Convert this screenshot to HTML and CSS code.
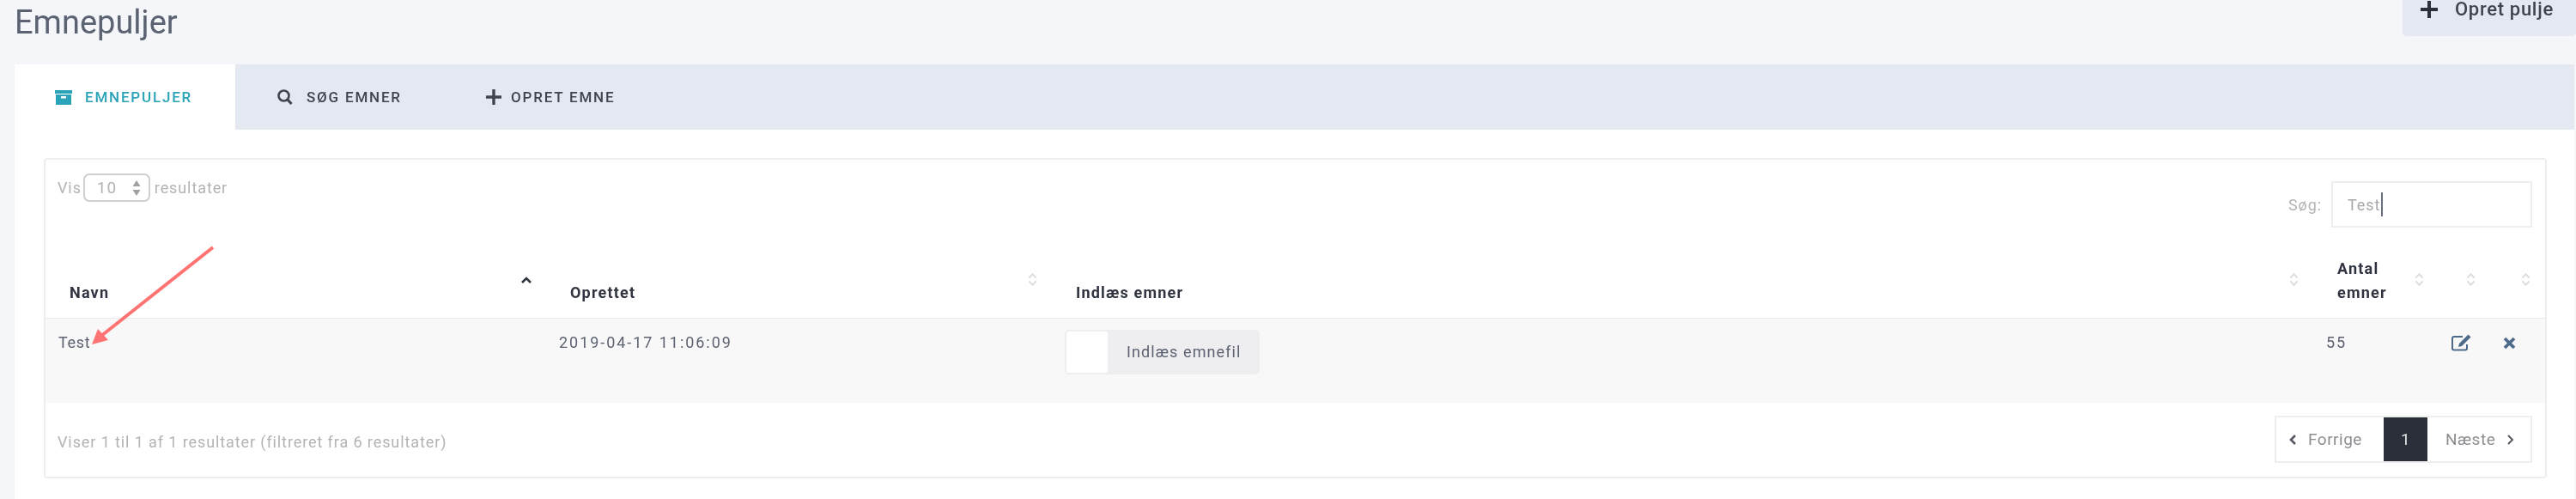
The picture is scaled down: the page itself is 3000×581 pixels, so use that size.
FILE: index.html
```html
<!DOCTYPE html>
<html lang="da">
<head>
<meta charset="utf-8">
<title>Emnepuljer</title>
<link rel="stylesheet" href="styles.css">
</head>
<body>
<div class="page">
  <header class="topbar">
    <h1 class="title">Emnepuljer</h1>
    <button class="new-btn" type="button">
      <svg class="new-icon" viewBox="0 0 20 20"><path d="M8 0h4v8h8v4h-8v8H8v-8H0V8h8z"/></svg>
      <span>Opret pulje</span>
    </button>
  </header>
  <main class="panel">
    <nav class="tabs">
      <a class="tab tab-active">
        <svg class="tab-icon-box" viewBox="0 0 20 17"><path d="M0 0h20v4H0zM1 5h18v12H1zM7 7v2.5h6V7z" fill-rule="evenodd"/></svg>
        <span>EMNEPULJER</span>
      </a>
      <a class="tab tab-search">
        <svg class="tab-icon-search" viewBox="0 0 18 18"><circle cx="7.5" cy="7.5" r="6" fill="none" stroke-width="2.6"/><path d="M11.5 11.5l5 5.5" fill="none" stroke-width="3"/></svg>
        <span>SØG EMNER</span>
      </a>
      <a class="tab tab-create">
        <svg class="tab-icon-plus" viewBox="0 0 18 18"><path d="M7.3 0h3.4v7.3H18v3.4h-7.3V18H7.3v-7.3H0V7.3h7.3z"/></svg>
        <span>OPRET EMNE</span>
      </a>
    </nav>
    <section class="card">
      <div class="toolbar">
        <div class="length">
          <span>Vis</span>
          <span class="select"><span>10</span>
            <svg class="select-arrows" viewBox="0 0 10 18"><path d="M5 0l4.5 7h-9zM5 18l-4.500-7h9z"/></svg>
          </span>
          <span class="length-after">resultater</span>
        </div>
        <div class="search">
          <span>Søg:</span>
          <span class="search-input"><span>Test</span><i class="caret"></i></span>
        </div>
      </div>
      <table class="grid">
        <colgroup>
          <col class="c1"><col class="c2"><col class="c3"><col class="c4"><col class="c5"><col class="c6">
        </colgroup>
        <thead>
          <tr>
            <th><div class="th"><span>Navn</span>
              <svg class="sort sort-on" viewBox="0 0 12 8"><path d="M1 7l5-5 5 5" fill="none" stroke-width="2.6"/></svg></div></th>
            <th><div class="th"><span>Oprettet</span>
              <svg class="sort" viewBox="0 0 12 18"><path d="M1.5 7L6 2l4.500 5M1.500 11L6 16l4.500-5" fill="none" stroke-width="2"/></svg></div></th>
            <th><div class="th"><span>Indlæs emner</span>
              <svg class="sort" viewBox="0 0 12 18"><path d="M1.5 7L6 2l4.500 5M1.500 11L6 16l4.500-5" fill="none" stroke-width="2"/></svg></div></th>
            <th><div class="th"><span>Antal<br>emner</span>
              <svg class="sort" viewBox="0 0 12 18"><path d="M1.5 7L6 2l4.500 5M1.500 11L6 16l4.500-5" fill="none" stroke-width="2"/></svg></div></th>
            <th><div class="th"><span></span>
              <svg class="sort" viewBox="0 0 12 18"><path d="M1.5 7L6 2l4.500 5M1.500 11L6 16l4.500-5" fill="none" stroke-width="2"/></svg></div></th>
            <th><div class="th"><span></span>
              <svg class="sort" viewBox="0 0 12 18"><path d="M1.5 7L6 2l4.500 5M1.500 11L6 16l4.500-5" fill="none" stroke-width="2"/></svg></div></th>
          </tr>
        </thead>
        <tbody>
          <tr>
            <td>Test</td>
            <td class="num">2019-04-17 11:06:09</td>
            <td class="file-cell">
              <span class="file"><span class="file-box"></span><span class="file-label">Indlæs emnefil</span></span>
            </td>
            <td class="num">55</td>
            <td class="icon-cell">
              <svg class="edit" viewBox="0 0 24 21"><path d="M18 13v4.500a2 2 0 0 1-2 2H3a2 2 0 0 1-2-2V6a2 2 0 0 1 2-2h10" fill="none" stroke-width="2"/><path class="fill" d="M19.500 1.500l3 3L12 15l-4 1 1-4z"/></svg>
            </td>
            <td class="icon-cell">
              <svg class="close" viewBox="0 0 15 15"><path d="M2 2l11 11M13 2L2 13" fill="none" stroke-width="3.800"/></svg>
            </td>
          </tr>
        </tbody>
      </table>
      <footer class="card-foot">
        <div class="info">Viser 1 til 1 af 1 resultater (filtreret fra 6 resultater)</div>
        <div class="pager">
          <a class="pg pg-prev">
            <svg class="chev" viewBox="0 0 9 14"><path d="M7 2L2 7l5 5" fill="none" stroke-width="2.600"/></svg>
            <span>Forrige</span>
          </a>
          <a class="pg pg-num">1</a>
          <a class="pg pg-next">
            <span>Næste</span>
            <svg class="chev" viewBox="0 0 9 14"><path d="M2 2l5 5-5 5" fill="none" stroke-width="2"/></svg>
          </a>
        </div>
      </footer>
    </section>
  </main>
  <svg class="arrow" viewBox="0 0 3000 581">
    <path class="arrow-line" d="M248 288L118 391"/>
    <path class="arrow-head" d="M107 401L114 383L126 396z"/>
  </svg>
</div>
</body>
</html>
```
FILE: styles.css
```css
* { box-sizing: border-box; }
html, body { margin: 0; padding: 0; }
body {
  background: #f4f6fa;
  font-family: "Roboto", "Liberation Sans", sans-serif;
  font-size: 18px;
  color: #5c6270;
}
.page {
  position: relative;
  width: 3000px;
  height: 581px;
  overflow: hidden;
  padding-left: 17px;
  filter: blur(0.5px);
}
.topbar {
  display: flex;
  justify-content: space-between;
  align-items: flex-start;
  height: 75px;
}
.title {
  margin: 4px 0 0;
  font-size: 38px;
  line-height: 44px;
  font-weight: 400;
  color: #5b6272;
}
.new-btn {
  display: flex;
  align-items: center;
  gap: 20px;
  width: 202px;
  height: 42px;
  padding: 0 0 20px 21px;
  border: 0;
  border-radius: 0 0 5px 5px;
  background: #e4e8f1;
  font: 500 22px/22px "Roboto", sans-serif;
  letter-spacing: 0.7px;
  color: #3f4450;
}
.new-icon { width: 20px; height: 20px; fill: #2a2f39; }
.panel {
  width: 2981px;
  height: 506px;
  background: #fff;
}
.tabs {
  display: flex;
  height: 76px;
  background: #e4e8f1;
}
.tab {
  display: flex;
  align-items: center;
  height: 76px;
  font-size: 17px;
  font-weight: 500;
  letter-spacing: 1.8px;
  color: #3f4450;
}
.tab-active {
  width: 257px;
  padding-left: 47px;
  gap: 15px;
  background: #fff;
  color: #2aa3b8;
}
.tab-search { padding-left: 49px; gap: 16px; width: 275px; }
.tab-create { gap: 11px; padding-left: 17px; }
.tab-icon-box { width: 20px; height: 17px; fill: #2aa3b8; }
.tab-icon-search { width: 18px; height: 18px; stroke: #3f4450; }
.tab-icon-plus { width: 18px; height: 18px; fill: #3f4450; }
.card {
  width: 2915px;
  height: 373px;
  margin: 33px 0 0 34px;
  border: 2px solid #eeeeef;
  border-radius: 4px;
}
.toolbar {
  display: flex;
  justify-content: space-between;
  align-items: flex-start;
  height: 98px;
  padding: 16px 15px 0 14px;
  color: #b3b3b5;
  letter-spacing: 0.9px;
}
.length { display: flex; align-items: center; gap: 2px; }
.length-after { margin-left: 3px; }
.select {
  display: flex;
  align-items: center;
  justify-content: space-between;
  width: 78px;
  height: 33px;
  padding: 0 9px 0 14px;
  border: 2px solid #cfcfd1;
  border-radius: 7px;
  font-size: 19px;
}
.select-arrows { width: 10px; height: 18px; fill: #a0a0a3; }
.search { display: flex; align-items: center; gap: 11px; margin-top: 9px; }
.search-input {
  display: flex;
  align-items: center;
  width: 234px;
  height: 54px;
  padding-left: 17px;
  border: 2px solid #eeeeef;
  color: #a8a8ab;
}
.caret { width: 2px; height: 28px; margin-left: 1px; background: #6b7080; }
.grid {
  width: 2911px;
  table-layout: fixed;
  border-collapse: collapse;
}
.c1 { width: 583px; }
.c2 { width: 589px; }
.c3 { width: 1469px; }
.c4 { width: 146px; }
.c5 { width: 60px; }
.c6 { width: 64px; }
.grid th {
  height: 86px;
  padding: 15px 17px 15px 28px;
  border-bottom: 1px solid #e9e9eb;
  vertical-align: bottom;
  text-align: left;
  font-weight: 700;
  letter-spacing: 1.2px;
  color: #2f3440;
}
.th {
  display: flex;
  justify-content: space-between;
  align-items: flex-end;
  height: 56px;
  line-height: 28px;
}
.sort {
  align-self: flex-start;
  flex: none;
  width: 11px;
  height: 17px;
  margin-top: 18px;
  stroke: #dcdcde;
}
.sort-on {
  width: 12px;
  height: 8px;
  margin-top: 23px;
  stroke: #2f3440;
}
.grid td {
  height: 98px;
  padding: 14px 15px 0;
  background: #f8f8f9;
  vertical-align: top;
  line-height: 28px;
  letter-spacing: 0.7px;
}
.grid .num { letter-spacing: 1.95px; }
.grid .file-cell { padding-top: 13px; }
.file {
  display: flex;
  align-items: center;
  width: 227px;
  height: 52px;
  padding: 2px;
  border-radius: 5px;
  background: #eeeef1;
}
.file-box { width: 48px; height: 48px; border-radius: 3px; background: #fff; }
.file-label { margin-left: 22px; color: #5c6270; letter-spacing: 1.1px; }
.icon-cell svg { display: block; }
.edit { width: 24px; height: 21px; margin-top: 3px; stroke: #4e6a8a; }
.fill { fill: #4e6a8a; stroke: none; }
.close { width: 15px; height: 15px; margin-top: 7px; stroke: #4e6a8a; }
.card-foot {
  display: flex;
  justify-content: space-between;
  align-items: center;
  height: 86px;
  padding: 0 15px 0 14px;
  color: #b3b3b5;
}
.info { margin-top: 6px; letter-spacing: 0.9px; }
.pager {
  display: flex;
  align-items: stretch;
  height: 55px;
  border: 2px solid #eeeeef;
  color: #8e8e92;
  font-size: 19px;
  letter-spacing: 0.5px;
}
.pg { display: flex; align-items: center; }
.pg-prev { width: 125px; padding-left: 15px; gap: 13px; }
.pg-num {
  justify-content: center;
  width: 51px;
  background: #2a2f39;
  color: #e6e6e6;
}
.pg-next { width: 120px; padding-left: 21px; gap: 13px; }
.chev { width: 9px; height: 14px; stroke: #55595f; }
.arrow {
  position: absolute;
  left: 0;
  top: 0;
  width: 3000px;
  height: 581px;
  pointer-events: none;
}
.arrow-line { fill: none; stroke: #ff7373; stroke-width: 4; }
.arrow-head { fill: #ff7373; }
```
